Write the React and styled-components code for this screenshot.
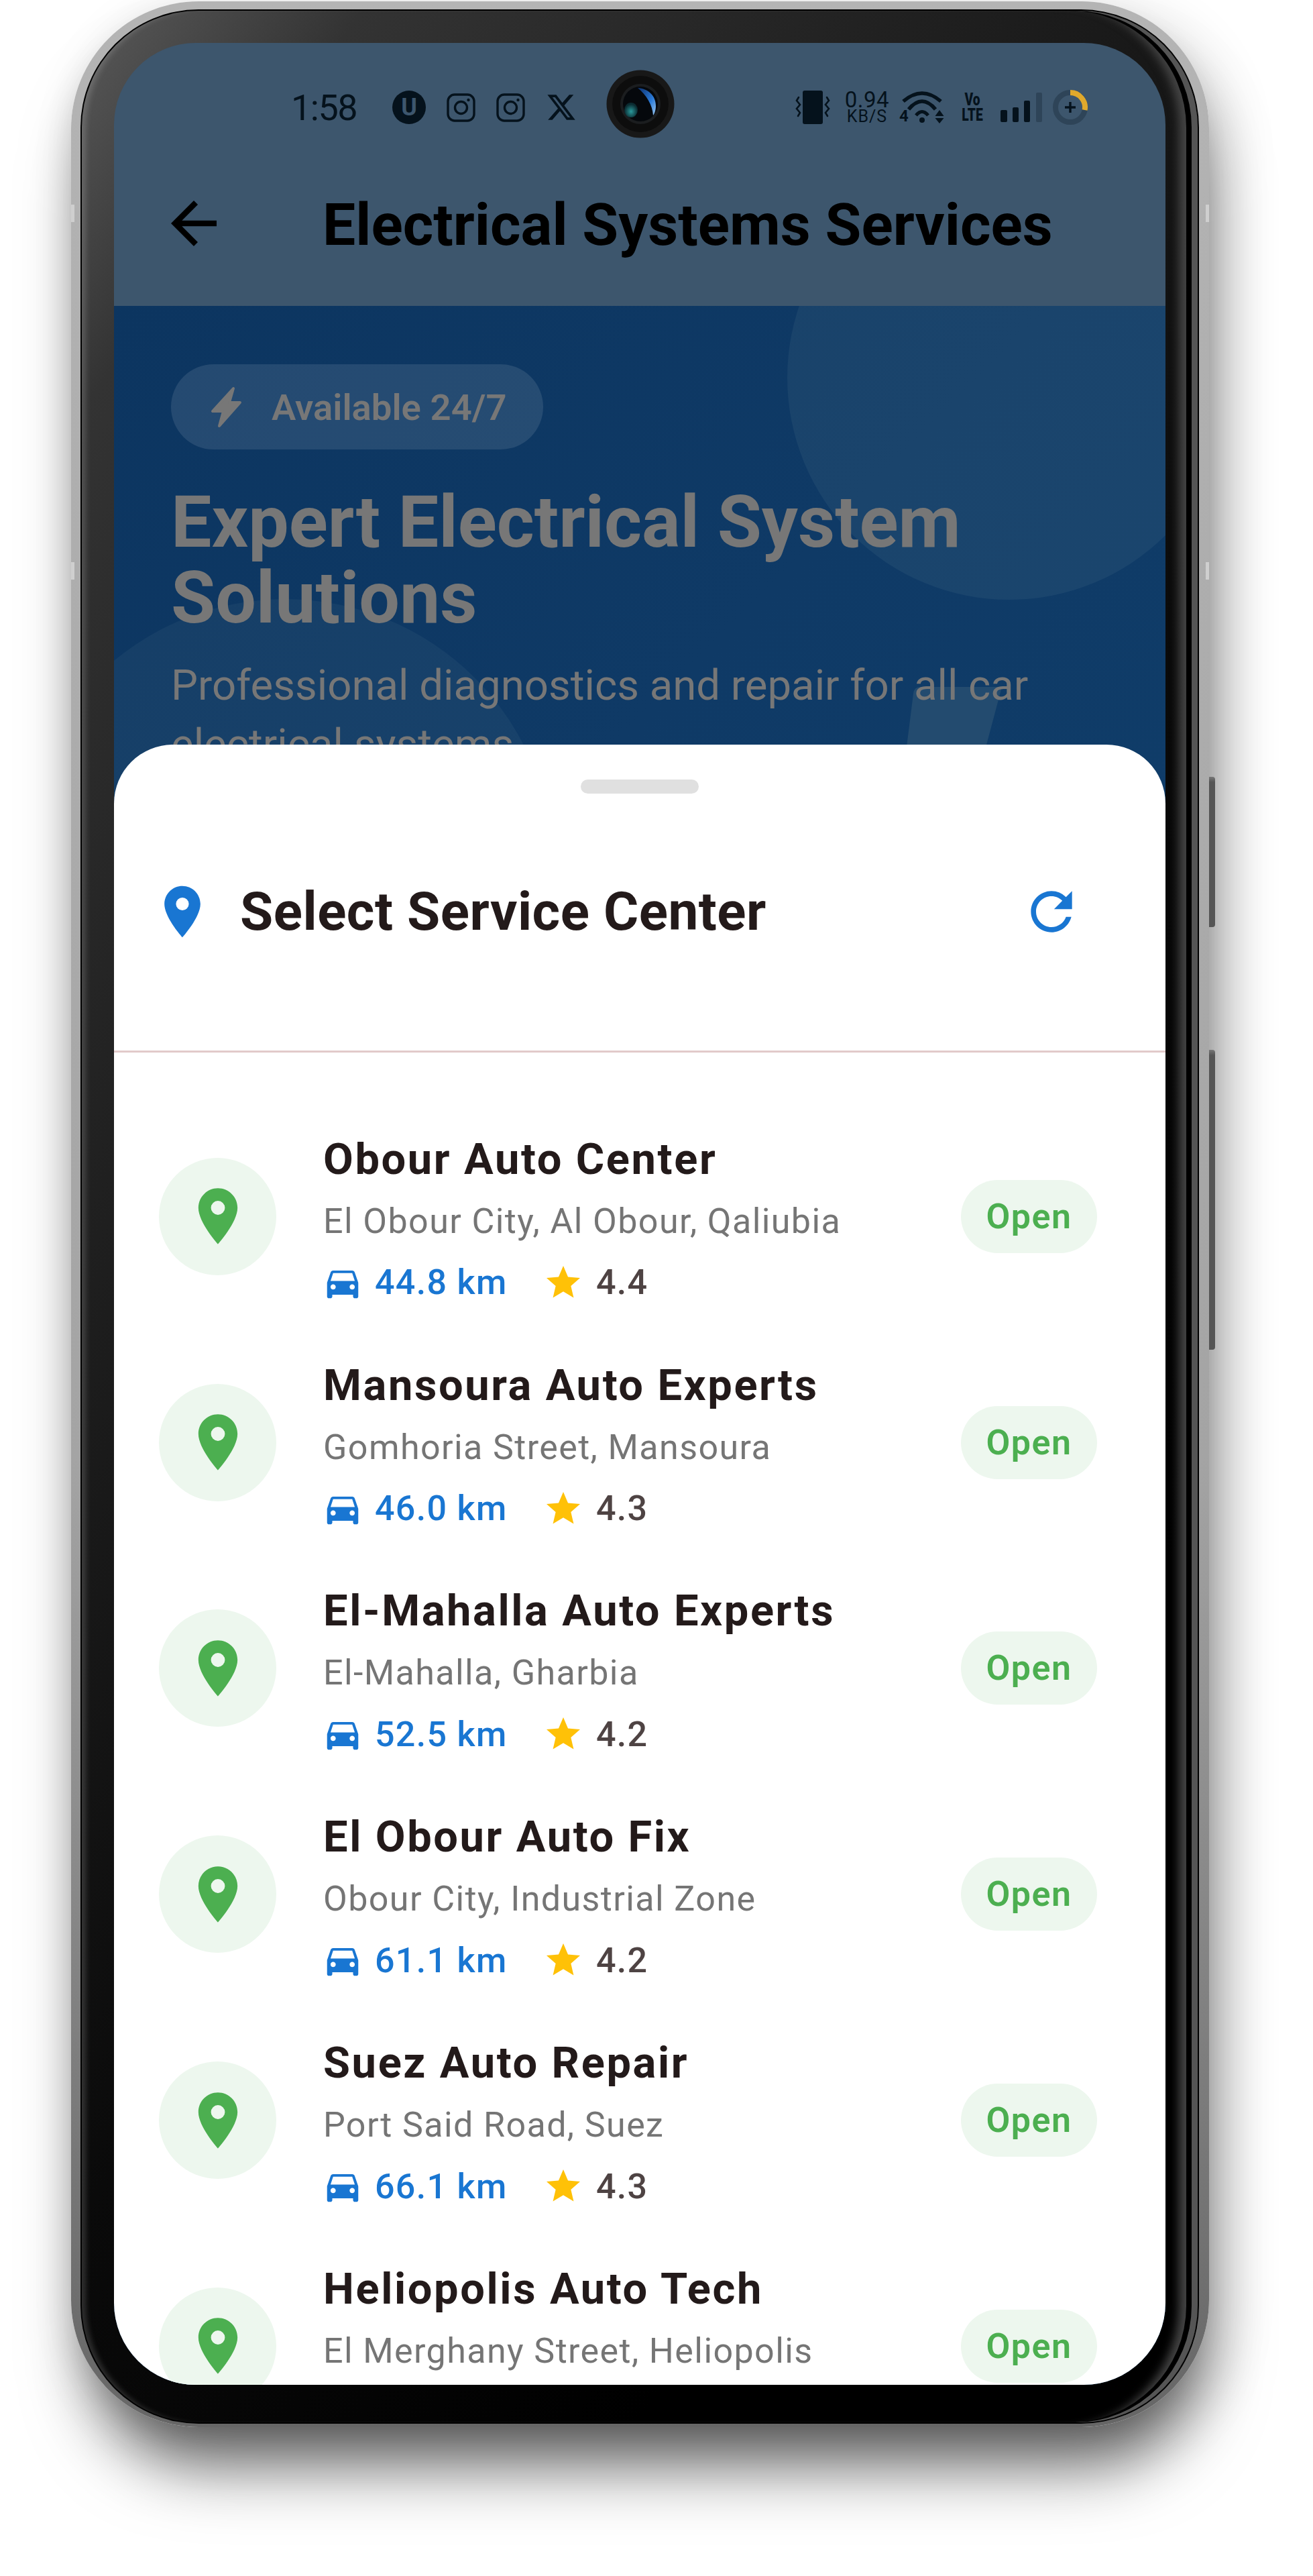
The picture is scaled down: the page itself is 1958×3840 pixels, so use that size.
import React from "react";
import styled, { createGlobalStyle } from "styled-components";
import { MdArrowBack, MdLocationOn, MdRefresh, MdDirectionsCar, MdStar } from "react-icons/md";
import { FaXTwitter } from "react-icons/fa6";

const GlobalStyle = createGlobalStyle`
  html, body {
    margin: 0;
    padding: 0;
    background: #fff;
  }
  body {
    font-family: Roboto, "Liberation Sans", sans-serif;
  }
`;

const centers = [
  { name: "Obour Auto Center", address: "El Obour City, Al Obour, Qaliubia", distance: "44.8 km", rating: "4.4" },
  { name: "Mansoura Auto Experts", address: "Gomhoria Street, Mansoura", distance: "46.0 km", rating: "4.3" },
  { name: "El-Mahalla Auto Experts", address: "El-Mahalla, Gharbia", distance: "52.5 km", rating: "4.2" },
  { name: "El Obour Auto Fix", address: "Obour City, Industrial Zone", distance: "61.1 km", rating: "4.2" },
  { name: "Suez Auto Repair", address: "Port Said Road, Suez", distance: "66.1 km", rating: "4.3" },
  { name: "Heliopolis Auto Tech", address: "El Merghany Street, Heliopolis" },
];

const InstagramIcon = () => (
  <svg width="43" height="43" viewBox="0 0 43 43" fill="none" stroke="#05121c">
    <rect x="2" y="2" width="39" height="39" rx="10" strokeWidth="3.4" />
    <circle cx="21.5" cy="21.5" r="9" strokeWidth="3.4" />
    <circle cx="32.5" cy="10" r="2.2" fill="#05121c" stroke="none" />
  </svg>
);

const BoltIcon = () => (
  <svg width="47" height="62" viewBox="0 0 47 62" fill="#777" stroke="#777" strokeWidth="4" strokeLinejoin="round">
    <path d="M34 3 L3 37 L19 37 L13 59 L44 24 L28 24 Z" />
  </svg>
);

const VibrateIcon = () => (
  <svg width="52" height="50" viewBox="0 0 52 50" fill="none" stroke="#05121c" strokeLinecap="round">
    <rect x="11" y="0" width="30" height="50" rx="3" fill="#05121c" stroke="none" />
    <path d="M5 10 L2 15 L7 21 L2 27 L7 33 L4 38" strokeWidth="2.6" />
    <path d="M47 10 L50 15 L45 21 L50 27 L45 33 L48 38" strokeWidth="2.6" />
  </svg>
);

const WifiIcon = () => (
  <svg width="68" height="52" viewBox="0 0 68 52" fill="none" stroke="#05121c" strokeWidth="5.5">
    <path d="M6 17 Q34 -7 62 17" />
    <path d="M14 29 Q34 5 54 29" />
    <path d="M25 38 Q34 27 43 38" strokeWidth="5" />
    <circle cx="34" cy="45" r="4" fill="#05121c" stroke="none" />
    <path d="M53.5 39 H66.5 L60 30 Z M53.5 42 H66.5 L60 50 Z" fill="#05121c" stroke="none" />
  </svg>
);

const SignalIcon = () => (
  <svg width="62" height="44" viewBox="0 0 62 44">
    <rect x="0" y="26" width="10" height="18" rx="2" fill="#05121c" />
    <rect x="18" y="22" width="9" height="22" rx="2" fill="#05121c" />
    <rect x="35" y="12" width="9" height="32" rx="2" fill="#05121c" />
    <rect x="53" y="0" width="9" height="44" rx="2" fill="#2e4458" />
  </svg>
);

const BatteryIcon = () => (
  <svg width="52" height="52" viewBox="0 0 52 52" fill="none">
    <circle cx="26" cy="26" r="22" stroke="#2e4458" strokeWidth="8" />
    <path d="M26 4 A22 22 0 0 1 47.6 30" stroke="#e0a92c" strokeWidth="8" />
    <path d="M26 18 V34 M18 26 H34" stroke="#05121c" strokeWidth="3.4" />
  </svg>
);

const CameraLens = () => (
  <svg width="102" height="102" viewBox="0 0 102 102">
    <defs>
      <radialGradient id="tealGlow" cx="0.5" cy="0.6" r="0.5">
        <stop offset="0" stopColor="#2a9a9c" />
        <stop offset="1" stopColor="#0a2a30" />
      </radialGradient>
      <linearGradient id="blueGlow" x1="0" y1="0" x2="1" y2="1">
        <stop offset="0" stopColor="#0d2f6a" />
        <stop offset="0.6" stopColor="#2a7ad8" />
        <stop offset="1" stopColor="#9cc8f0" />
      </linearGradient>
    </defs>
    <circle cx="51" cy="51" r="50.5" fill="#181818" />
    <circle cx="51" cy="51" r="42" fill="#0d0d0d" />
    <circle cx="51" cy="51" r="30" fill="#1b1d1f" />
    <circle cx="51" cy="51" r="26" fill="#05080c" />
    <ellipse cx="37" cy="60" rx="10" ry="11" fill="url(#tealGlow)" />
    <path d="M47 27 C62 28 74 38 74 54 C74 60 72 66 70 68 C69 52 60 38 47 27 Z" fill="url(#blueGlow)" />
  </svg>
);

const App = () => {
  return (
    <Page>
      <GlobalStyle />
      <Phone>
        <SideButton $top={1156} $height={224} />
        <SideButton $top={1563} $height={447} />
        <Edge $side="right" $top={303} />
        <Edge $side="right" $top={836} />
        <Edge $side="left" $top={303} />
        <Edge $side="left" $top={836} />
        <InnerLine>
          <Bezel>
            <Screen>
              <Backdrop>
                <StatusBar>
                  <StatusLeft>
                    <Clock>1:58</Clock>
                    <UBadge>U</UBadge>
                    <InstagramIcon />
                    <InstagramIcon />
                    <FaXTwitter size={46} color="#05121c" />
                  </StatusLeft>
                  <CameraHole>
                    <CameraLens />
                  </CameraHole>
                  <StatusRight>
                    <VibrateIcon />
                    <Speed>
                      <SpeedValue>0.94</SpeedValue>
                      <SpeedUnit>KB/S</SpeedUnit>
                    </Speed>
                    <WifiGroup>
                      <WifiFour>4</WifiFour>
                      <WifiIcon />
                    </WifiGroup>
                    <Volte>
                      <span>Vo</span>
                      <span>LTE</span>
                    </Volte>
                    <SignalGroup>
                      <SignalIcon />
                    </SignalGroup>
                    <BatteryGroup>
                      <BatteryIcon />
                    </BatteryGroup>
                  </StatusRight>
                </StatusBar>
                <AppBar>
                  <MdArrowBack size={102} color="#000" />
                  <AppBarTitle>Electrical Systems Services</AppBarTitle>
                </AppBar>
                <Hero>
                  <BigCircle />
                  <SmallCircle />
                  <HeroBolt viewBox="0 0 160 120" width="160" height="120">
                    <path d="M22 0 H144 L116 105 H0 L12 10 Q13 0 22 0 Z" fill="#234b6f" />
                  </HeroBolt>
                  <HeroContent>
                    <AvailablePill>
                      <BoltIcon />
                      <AvailableText>Available 24/7</AvailableText>
                    </AvailablePill>
                    <HeroTitle>Expert Electrical System Solutions</HeroTitle>
                    <HeroText>Professional diagnostics and repair for all car electrical systems</HeroText>
                  </HeroContent>
                </Hero>
              </Backdrop>
              <Sheet>
                <Handle />
                <SheetHeader>
                  <SheetTitleWrap>
                    <MdLocationOn size={92} color="#1976d2" />
                    <SheetTitle>Select Service Center</SheetTitle>
                  </SheetTitleWrap>
                  <MdRefresh size={92} color="#1976d2" />
                </SheetHeader>
                <List>
                  {centers.map((center) => (
                    <Row key={center.name}>
                      <Avatar>
                        <MdLocationOn size={100} color="#4caf50" />
                      </Avatar>
                      <Info>
                        <Name>{center.name}</Name>
                        <Address>{center.address}</Address>
                        <Meta>
                          {/* last row is cut off by the screen, no meta line visible */}
                          {center.distance && (
                            <>
                              <CarIcon size={62} color="#1976d2" />
                              <Distance>{center.distance}</Distance>
                              <MdStar size={60} color="#ffc107" />
                              <Rating>{center.rating}</Rating>
                            </>
                          )}
                        </Meta>
                      </Info>
                      <OpenPill>Open</OpenPill>
                    </Row>
                  ))}
                </List>
              </Sheet>
            </Screen>
          </Bezel>
        </InnerLine>
      </Phone>
    </Page>
  );
};

const Page = styled.div`
  width: 1958px;
  height: 3840px;
  padding: 2px 0 0 106px;
  box-sizing: border-box;
  overflow: hidden;
  background: #fff;
`;

const Phone = styled.div`
  position: relative;
  width: 1697px;
  height: 3616px;
  box-sizing: border-box;
  padding: 12px 15px 5px 14px;
  border-radius: 190px;
  background: linear-gradient(180deg, #b4b4b4 0, #a4a4a4 60%, #666 100%);
  box-shadow:
    8px 80px 100px -24px rgba(0, 0, 0, 0.6),
    22px 20px 80px rgba(0, 0, 0, 0.16),
    -6px 10px 40px rgba(0, 0, 0, 0.05);
`;

const SideButton = styled.div`
  position: absolute;
  right: -9px;
  top: ${(p) => p.$top}px;
  width: 9px;
  height: ${(p) => p.$height}px;
  border-radius: 0 4px 4px 0;
  background: linear-gradient(180deg, #777 0, #555 8px, #555 100%);
`;

const Edge = styled.div`
  position: absolute;
  ${(p) => p.$side}: 0;
  top: ${(p) => p.$top}px;
  width: 5px;
  height: 26px;
  background: #cfcfcf;
`;

const InnerLine = styled.div`
  width: 100%;
  height: 100%;
  box-sizing: border-box;
  padding: 2px;
  border-radius: 176px;
  background: #000;
`;

const Bezel = styled.div`
  width: 100%;
  height: 100%;
  box-sizing: border-box;
  padding: 48px 48px 56px 48px;
  border-radius: 174px;
  background: linear-gradient(125deg, #5a5a5a 0, #333 10%, #202020 30%, #0a0a0a 55%, #000 80%);
  box-shadow:
    inset 10px 0 8px -4px rgba(255, 255, 255, 0.16),
    inset -9px 0 0 #555,
    inset -17px 0 0 #000,
    inset -40px 0 14px -12px #444;
`;

const Screen = styled.div`
  position: relative;
  width: 100%;
  height: 100%;
  overflow: hidden;
  border-radius: 122px;
  background: #3d566d;
`;

const Backdrop = styled.div`
  display: flex;
  flex-direction: column;
  height: 100%;
`;

const StatusBar = styled.div`
  position: relative;
  display: flex;
  align-items: center;
  justify-content: space-between;
  height: 180px;
  padding: 12px 116px 0 264px;
  box-sizing: border-box;
`;

const StatusLeft = styled.div`
  display: flex;
  align-items: center;
  gap: 31px;
  color: #05121c;
`;

const Clock = styled.span`
  width: 120px;
  font-size: 54px;
  font-weight: 400;
  letter-spacing: -1.5px;
  color: #05121c;
`;

const UBadge = styled.span`
  display: flex;
  align-items: center;
  justify-content: center;
  width: 50px;
  height: 50px;
  border-radius: 50%;
  font-size: 36px;
  font-weight: 700;
  color: #3d566d;
  background: #05121c;
`;

const CameraHole = styled.div`
  position: absolute;
  left: 734px;
  top: 40px;
  display: flex;
  width: 102px;
  height: 102px;
`;

const StatusRight = styled.div`
  display: flex;
  align-items: center;
  color: #05121c;
`;

const Speed = styled.div`
  display: flex;
  flex-direction: column;
  align-items: center;
  width: 72px;
  margin-left: 19px;
`;

const SpeedValue = styled.span`
  font-size: 33px;
  line-height: 27px;
  letter-spacing: 0.5px;
`;

const SpeedUnit = styled.span`
  font-size: 25px;
  line-height: 23px;
  letter-spacing: 1px;
`;

const WifiGroup = styled.div`
  position: relative;
  display: flex;
  margin-left: 12px;
`;

const WifiFour = styled.span`
  position: absolute;
  left: 0;
  bottom: 2px;
  font-size: 24px;
  font-weight: 700;
  line-height: 22px;
`;

const Volte = styled.div`
  display: flex;
  flex-direction: column;
  align-items: center;
  width: 32px;
  margin-left: 25px;
  font-size: 26px;
  font-weight: 900;
  line-height: 23px;
  transform: scaleX(0.74);
`;

const SignalGroup = styled.div`
  display: flex;
  margin-left: 26px;
`;

const BatteryGroup = styled.div`
  display: flex;
  margin-left: 16px;
`;

const AppBar = styled.div`
  display: flex;
  align-items: center;
  gap: 141px;
  height: 212px;
  box-sizing: border-box;
  padding: 0 0 34px 68px;
  background: #3d566d;
`;

const AppBarTitle = styled.h1`
  margin: 3px 0 0;
  font-family: Roboto, "Liberation Sans", sans-serif;
  font-size: 87.5px;
  font-weight: 700;
  color: #000;
  white-space: nowrap;
`;

const Hero = styled.div`
  position: relative;
  flex: 1;
  overflow: hidden;
  background: linear-gradient(135deg, #0c3560 0, #0f3a66 30%, #10426f 100%);
`;

const BigCircle = styled.div`
  position: absolute;
  left: 1004px;
  top: -224px;
  width: 662px;
  height: 662px;
  border-radius: 50%;
  background: rgba(235, 250, 235, 0.05);
`;

const SmallCircle = styled.div`
  position: absolute;
  left: -145px;
  top: 437px;
  width: 800px;
  height: 800px;
  border-radius: 50%;
  background: rgba(235, 250, 235, 0.045);
`;

const HeroBolt = styled.svg`
  position: absolute;
  left: 1180px;
  top: 568px;
`;

const HeroContent = styled.div`
  position: relative;
  padding: 87px 85px 0 85px;
`;

const AvailablePill = styled.div`
  display: inline-flex;
  align-items: center;
  gap: 44px;
  height: 127px;
  padding: 0 54px 0 59px;
  box-sizing: border-box;
  border-radius: 64px;
  background: rgba(255, 255, 255, 0.1);
`;

const AvailableText = styled.span`
  font-size: 54.5px;
  font-weight: 600;
  color: #777;
`;

const HeroTitle = styled.h2`
  margin: 52px 0 0;
  font-size: 107.5px;
  font-weight: 700;
  line-height: 113px;
  color: #777;
`;

const HeroText = styled.p`
  margin: 30px 0 0;
  font-size: 63.5px;
  font-weight: 400;
  line-height: 88px;
  color: #777;
`;

const Sheet = styled.div`
  position: absolute;
  left: 0;
  right: 0;
  top: 1046px;
  bottom: 0;
  border-radius: 88px 88px 0 0;
  background: #fff;
`;

const Handle = styled.div`
  width: 176px;
  height: 21px;
  margin: 0 auto;
  position: relative;
  top: 52px;
  border-radius: 11px;
  background: #e0e0e0;
`;

const SheetHeader = styled.div`
  display: flex;
  align-items: center;
  justify-content: space-between;
  height: 459px;
  box-sizing: border-box;
  margin-top: -21px;
  padding: 41px 124px 0 56px;
  border-bottom: 3px solid #e2caca;
`;

const SheetTitleWrap = styled.div`
  display: flex;
  align-items: center;
  gap: 40px;
`;

const SheetTitle = styled.h3`
  margin: 0;
  font-size: 80px;
  font-weight: 700;
  letter-spacing: 0.5px;
  color: #231a1a;
`;

const List = styled.div`
  display: flex;
  flex-direction: column;
  padding: 76px 102px 0 67px;
`;

const Row = styled.div`
  display: flex;
  align-items: center;
  height: 336.8px;
  flex: none;
`;

const Avatar = styled.div`
  display: flex;
  align-items: center;
  justify-content: center;
  flex: none;
  width: 175px;
  height: 175px;
  border-radius: 50%;
  background: #edf7ee;
`;

const Info = styled.div`
  display: flex;
  flex-direction: column;
  flex: 1;
  margin-left: 70px;
  padding-top: 7px;
`;

const Name = styled.div`
  font-size: 65px;
  font-weight: 700;
  line-height: 80px;
  letter-spacing: 2.6px;
  color: #231a1a;
`;

const Address = styled.div`
  margin-top: 20px;
  font-size: 52px;
  line-height: 66px;
  letter-spacing: 1.4px;
  color: #757575;
`;

const Meta = styled.div`
  display: flex;
  align-items: center;
  margin-top: 24px;
  height: 68px;
`;

const CarIcon = styled(MdDirectionsCar)`
  margin-left: -2px;
`;

const Distance = styled.span`
  margin-left: 17px;
  width: 251px;
  font-size: 52px;
  font-weight: 500;
  letter-spacing: 1.3px;
  color: #1976d2;
`;

const Rating = styled.span`
  margin-left: 19px;
  font-size: 52px;
  font-weight: 500;
  letter-spacing: 1.3px;
  color: #4e4343;
`;

const OpenPill = styled.div`
  display: flex;
  align-items: center;
  justify-content: center;
  flex: none;
  width: 203px;
  height: 109px;
  border-radius: 55px;
  font-size: 52px;
  font-weight: 600;
  letter-spacing: 1.5px;
  color: #4caf50;
  background: #edf7ee;
`;

export default App;
